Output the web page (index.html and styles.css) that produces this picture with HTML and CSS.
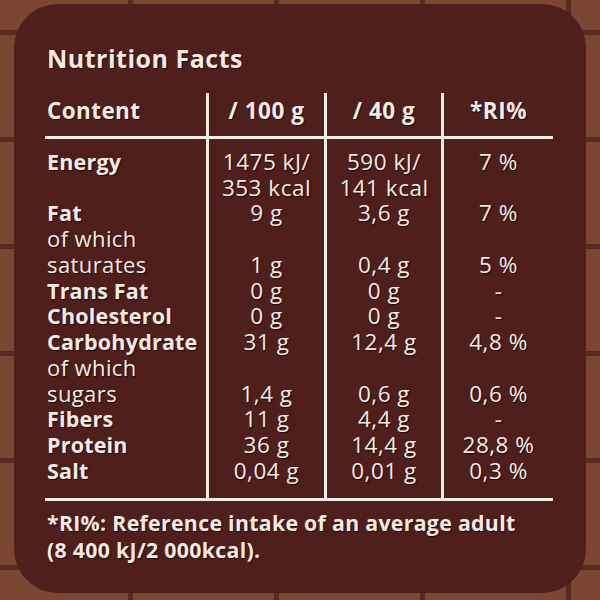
FILE: index.html
```html
<!DOCTYPE html>
<html>
<head>
<meta charset="utf-8">
<link rel="stylesheet" href="styles.css">
</head>
<body>
<div class="panel">
  <h1 class="title">Nutrition Facts</h1>
  <table class="facts">
    <colgroup><col class="c1"><col class="c2"><col class="c3"><col class="c4"></colgroup>
    <thead>
      <tr><th class="label">Content</th><th>/ 100 g</th><th>/ 40 g</th><th>*RI%</th></tr>
    </thead>
    <tbody>
      <tr class="first"><td class="label">Energy</td><td>1475 kJ/<br>353 kcal</td><td>590 kJ/<br>141 kcal</td><td>7 %</td></tr>
      <tr><td class="label">Fat</td><td>9 g</td><td>3,6 g</td><td>7 %</td></tr>
      <tr class="sub"><td class="label">of which<br>saturates</td><td>1 g</td><td>0,4 g</td><td>5 %</td></tr>
      <tr><td class="label">Trans Fat</td><td>0 g</td><td>0 g</td><td>-</td></tr>
      <tr><td class="label">Cholesterol</td><td>0 g</td><td>0 g</td><td>-</td></tr>
      <tr><td class="label">Carbohydrate</td><td>31 g</td><td>12,4 g</td><td>4,8 %</td></tr>
      <tr class="sub"><td class="label">of which<br>sugars</td><td>1,4 g</td><td>0,6 g</td><td>0,6 %</td></tr>
      <tr><td class="label">Fibers</td><td>11 g</td><td>4,4 g</td><td>-</td></tr>
      <tr><td class="label">Protein</td><td>36 g</td><td>14,4 g</td><td>28,8 %</td></tr>
      <tr class="last"><td class="label">Salt</td><td>0,04 g</td><td>0,01 g</td><td>0,3 %</td></tr>
    </tbody>
  </table>
  <p class="note">*RI%: Reference intake of an average adult<br>(8 400 kJ/2 000kcal).</p>
</div>
</body>
</html>
```
FILE: styles.css
```css
html, body {
  margin: 0;
  padding: 0;
}
body {
  width: 600px;
  height: 600px;
  overflow: hidden;
  background-color: #7b4733;
  background-image:
    linear-gradient(#5a2a20 5px, transparent 5px),
    linear-gradient(90deg, #5a2a20 5px, transparent 5px);
  background-size: 600px 107px, 146px 600px;
  background-position: 0 30px, 128px 0;
  font-family: "Open Sans", "DejaVu Sans", sans-serif;
  color: #f4ebe5;
  padding-top: 4px;
  padding-left: 14px;
  box-sizing: border-box;
}
.panel {
  width: 572px;
  height: 589px;
  box-sizing: border-box;
  background: #4f1f1c;
  border-radius: 44px;
  padding: 39px 33px 0 31px;
  text-shadow: 1px 1px 1px rgba(20, 0, 0, 0.75);
}
.title {
  margin: 0 0 20px 2px;
  font-size: 25px;
  line-height: 30px;
  font-weight: 700;
  letter-spacing: 0.5px;
}
.facts {
  width: 508px;
  table-layout: fixed;
  border-collapse: separate;
  border-spacing: 0;
  font-size: 22.5px;
  line-height: 25.75px;
  letter-spacing: 0.5px;
  font-weight: 500;
}
.c1 { width: 161px; }
.c2 { width: 118px; }
.c3 { width: 117px; }
.c4 { width: 112px; }
.facts th, .facts td {
  padding: 0;
  text-align: center;
  vertical-align: top;
  white-space: nowrap;
}
.facts th {
  font-weight: 700;
  padding-top: 5px;
  padding-bottom: 12px;
  border-bottom: 3px solid #f4ebe5;
}
.facts th + th, .facts td + td {
  border-left: 3px solid #f4ebe5;
}
.facts .label {
  text-align: left;
  padding-left: 2px;
  font-weight: 700;
  font-size: 21.5px;
  letter-spacing: 0.2px;
}
.facts th.label {
  font-size: 22.5px;
  letter-spacing: 0.4px;
}
.facts .sub td {
  vertical-align: bottom;
}
.facts .sub .label {
  font-weight: 500;
  font-size: 22px;
  letter-spacing: 0.4px;
}
.facts .first td {
  padding-top: 10px;
}
.facts .last td {
  padding-bottom: 14px;
  border-bottom: 3px solid #f4ebe5;
}
.note {
  margin: 8px 0 0 2px;
  font-size: 21.3px;
  line-height: 27px;
  font-weight: 700;
  letter-spacing: 0.3px;
}
```
